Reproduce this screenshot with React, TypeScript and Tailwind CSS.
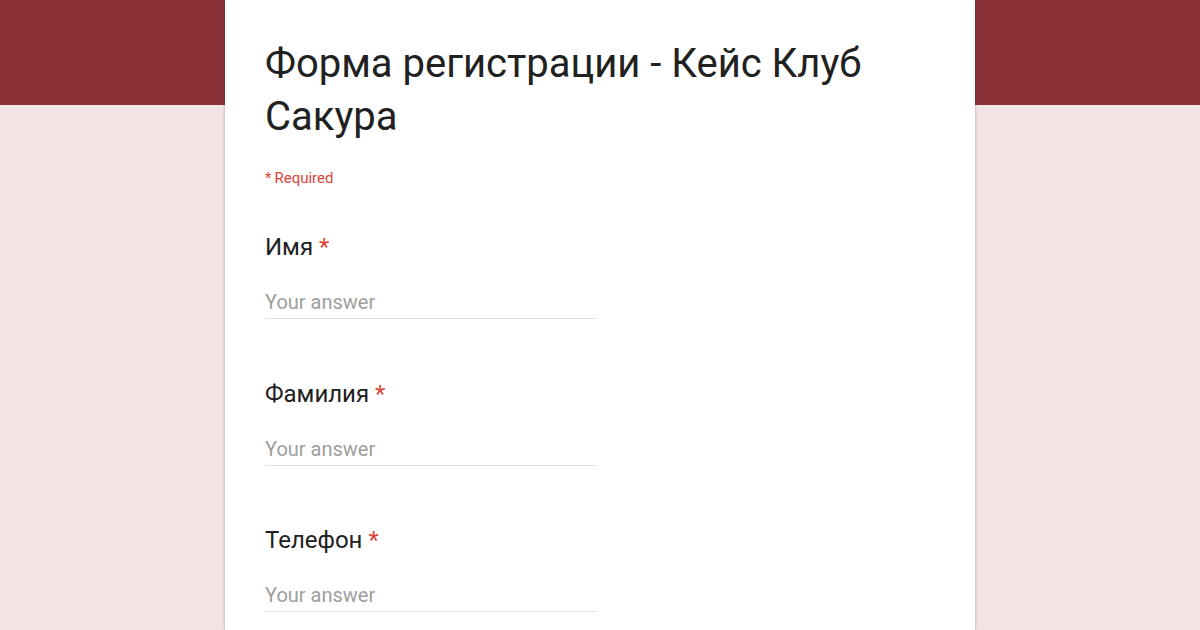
import React from "react";

const fields = ["Имя", "Фамилия", "Телефон"];

const App: React.FC = () => {
  return (
    <div
      className="relative h-[630px] w-[1200px] overflow-hidden bg-[#f2e4e5]"
      style={{ fontFamily: "Roboto, 'Liberation Sans', sans-serif" }}
    >
      <div className="absolute left-0 top-0 h-[105px] w-full bg-[#8b3237]" />
      <div className="relative mx-auto h-full w-[750px] bg-white px-10 pt-[37px] shadow-[0_0_3px_rgba(0,0,0,0.3)]">
        <h1 className="w-[620px] text-[40px] leading-[53px] text-[#212121]">
          Форма регистрации - Кейс Клуб Сакура
        </h1>
        <div className="mt-[26px] text-[15px] leading-[18px] text-[#db4437]">
          <span className="mr-[3px]">*</span>Required
        </div>
        <div className="pt-[44px]">
          {fields.map((f) => (
            <div key={f} className="h-[146.5px]">
              <div className="text-[24px] leading-[32px] text-[#212121]">
                {f} <span className="text-[#db4437]">*</span>
              </div>
              <div className="mt-[26px] w-[331px] border-b border-[#e0e0e0] pb-[3px] text-[20px] leading-[26px] text-[#9e9e9e]">
                Your answer
              </div>
            </div>
          ))}
        </div>
      </div>
    </div>
  );
};

export default App;
